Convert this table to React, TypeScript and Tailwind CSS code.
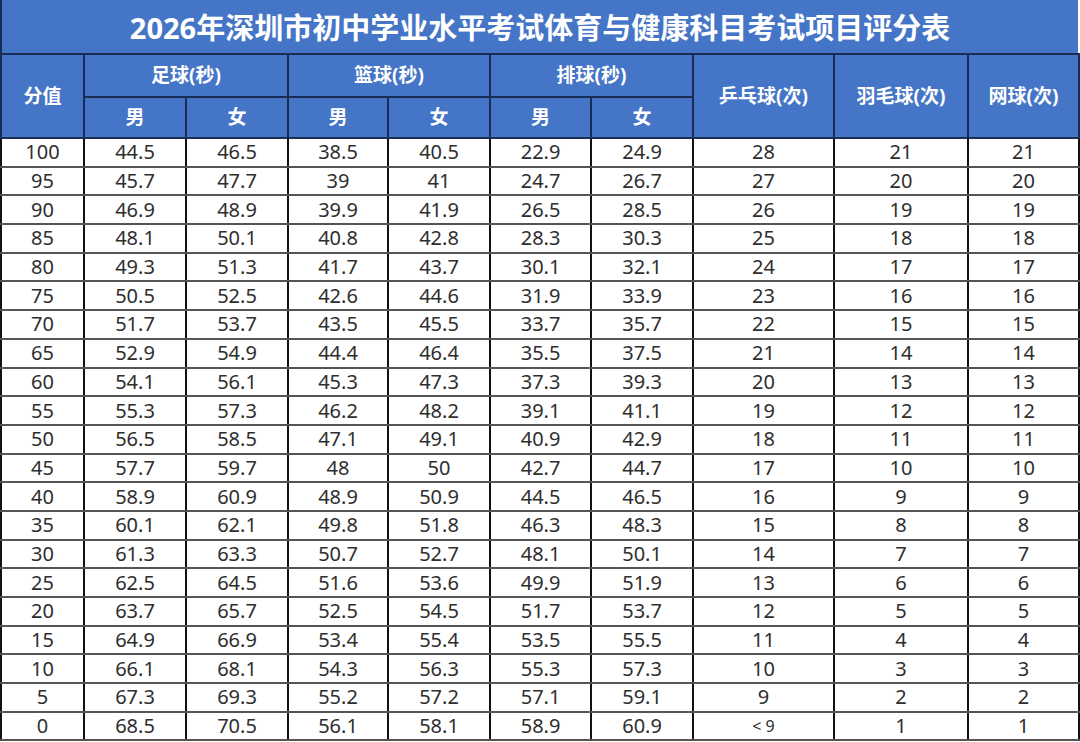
import React from "react";

const rows: string[][] = [
  ["100", "44.5", "46.5", "38.5", "40.5", "22.9", "24.9", "28", "21", "21"],
  ["95", "45.7", "47.7", "39", "41", "24.7", "26.7", "27", "20", "20"],
  ["90", "46.9", "48.9", "39.9", "41.9", "26.5", "28.5", "26", "19", "19"],
  ["85", "48.1", "50.1", "40.8", "42.8", "28.3", "30.3", "25", "18", "18"],
  ["80", "49.3", "51.3", "41.7", "43.7", "30.1", "32.1", "24", "17", "17"],
  ["75", "50.5", "52.5", "42.6", "44.6", "31.9", "33.9", "23", "16", "16"],
  ["70", "51.7", "53.7", "43.5", "45.5", "33.7", "35.7", "22", "15", "15"],
  ["65", "52.9", "54.9", "44.4", "46.4", "35.5", "37.5", "21", "14", "14"],
  ["60", "54.1", "56.1", "45.3", "47.3", "37.3", "39.3", "20", "13", "13"],
  ["55", "55.3", "57.3", "46.2", "48.2", "39.1", "41.1", "19", "12", "12"],
  ["50", "56.5", "58.5", "47.1", "49.1", "40.9", "42.9", "18", "11", "11"],
  ["45", "57.7", "59.7", "48", "50", "42.7", "44.7", "17", "10", "10"],
  ["40", "58.9", "60.9", "48.9", "50.9", "44.5", "46.5", "16", "9", "9"],
  ["35", "60.1", "62.1", "49.8", "51.8", "46.3", "48.3", "15", "8", "8"],
  ["30", "61.3", "63.3", "50.7", "52.7", "48.1", "50.1", "14", "7", "7"],
  ["25", "62.5", "64.5", "51.6", "53.6", "49.9", "51.9", "13", "6", "6"],
  ["20", "63.7", "65.7", "52.5", "54.5", "51.7", "53.7", "12", "5", "5"],
  ["15", "64.9", "66.9", "53.4", "55.4", "53.5", "55.5", "11", "4", "4"],
  ["10", "66.1", "68.1", "54.3", "56.3", "55.3", "57.3", "10", "3", "3"],
  ["5", "67.3", "69.3", "55.2", "57.2", "57.1", "59.1", "9", "2", "2"],
  ["0", "68.5", "70.5", "56.1", "58.1", "58.9", "60.9", "< 9", "1", "1"],
];

const widths = [83, 102, 102, 100, 102, 101, 102, 141, 134, 111];

const hd =
  "border-2 border-[#1c2d55] bg-[#4575c6] text-white font-bold text-center align-middle p-0";

export default function App() {
  return (
    <div
      className="w-[1080px] h-[742px] bg-white overflow-hidden"
      style={{ fontFamily: '"Noto Sans", "Noto Sans CJK SC", sans-serif' }}
    >
      <div className="w-[1078px] h-[54px] bg-[#4575c6] flex items-center justify-center border-l-2 border-[#1c2d55]">
        <span
          className="text-white font-bold text-[29px] leading-none pt-[1px]"
          style={{ fontFamily: '"Open Sans", "Noto Sans CJK SC", sans-serif' }}
        >
          2026年深圳市初中学业水平考试体育与健康科目考试项目评分表
        </span>
      </div>
      <table className="w-[1078px] table-fixed border-collapse -mt-[1px]">
        <colgroup>
          {widths.map((w, i) => (
            <col key={i} style={{ width: w }} />
          ))}
        </colgroup>
        <thead>
          <tr className="h-[43px]">
            <th rowSpan={2} className={`${hd} text-[19px]`}>分值</th>
            <th colSpan={2} className={`${hd} text-[19px]`}>足球(秒)</th>
            <th colSpan={2} className={`${hd} text-[19px]`}>篮球(秒)</th>
            <th colSpan={2} className={`${hd} text-[19px]`}>排球(秒)</th>
            <th rowSpan={2} className={`${hd} text-[19px]`}>乒乓球(次)</th>
            <th rowSpan={2} className={`${hd} text-[19px]`}>羽毛球(次)</th>
            <th rowSpan={2} className={`${hd} text-[19px]`}>网球(次)</th>
          </tr>
          <tr className="h-[41px]">
            <th className={`${hd} text-[19px]`}>男</th>
            <th className={`${hd} text-[19px]`}>女</th>
            <th className={`${hd} text-[19px]`}>男</th>
            <th className={`${hd} text-[19px]`}>女</th>
            <th className={`${hd} text-[19px]`}>男</th>
            <th className={`${hd} text-[19px]`}>女</th>
          </tr>
        </thead>
        <tbody>
          {rows.map((r, ri) => (
            <tr key={ri} className="h-[28.7px]">
              {r.map((c, ci) => (
                <td
                  key={ci}
                  className={`border-x-2 border-x-[#111] border-y-2 border-y-[#555] text-center align-middle p-0 leading-none text-[#2e2e2e] ${
                    c === "< 9" ? "text-[16px]" : "text-[20px]"
                  }`}
                >
                  {c}
                </td>
              ))}
            </tr>
          ))}
        </tbody>
      </table>
    </div>
  );
}
